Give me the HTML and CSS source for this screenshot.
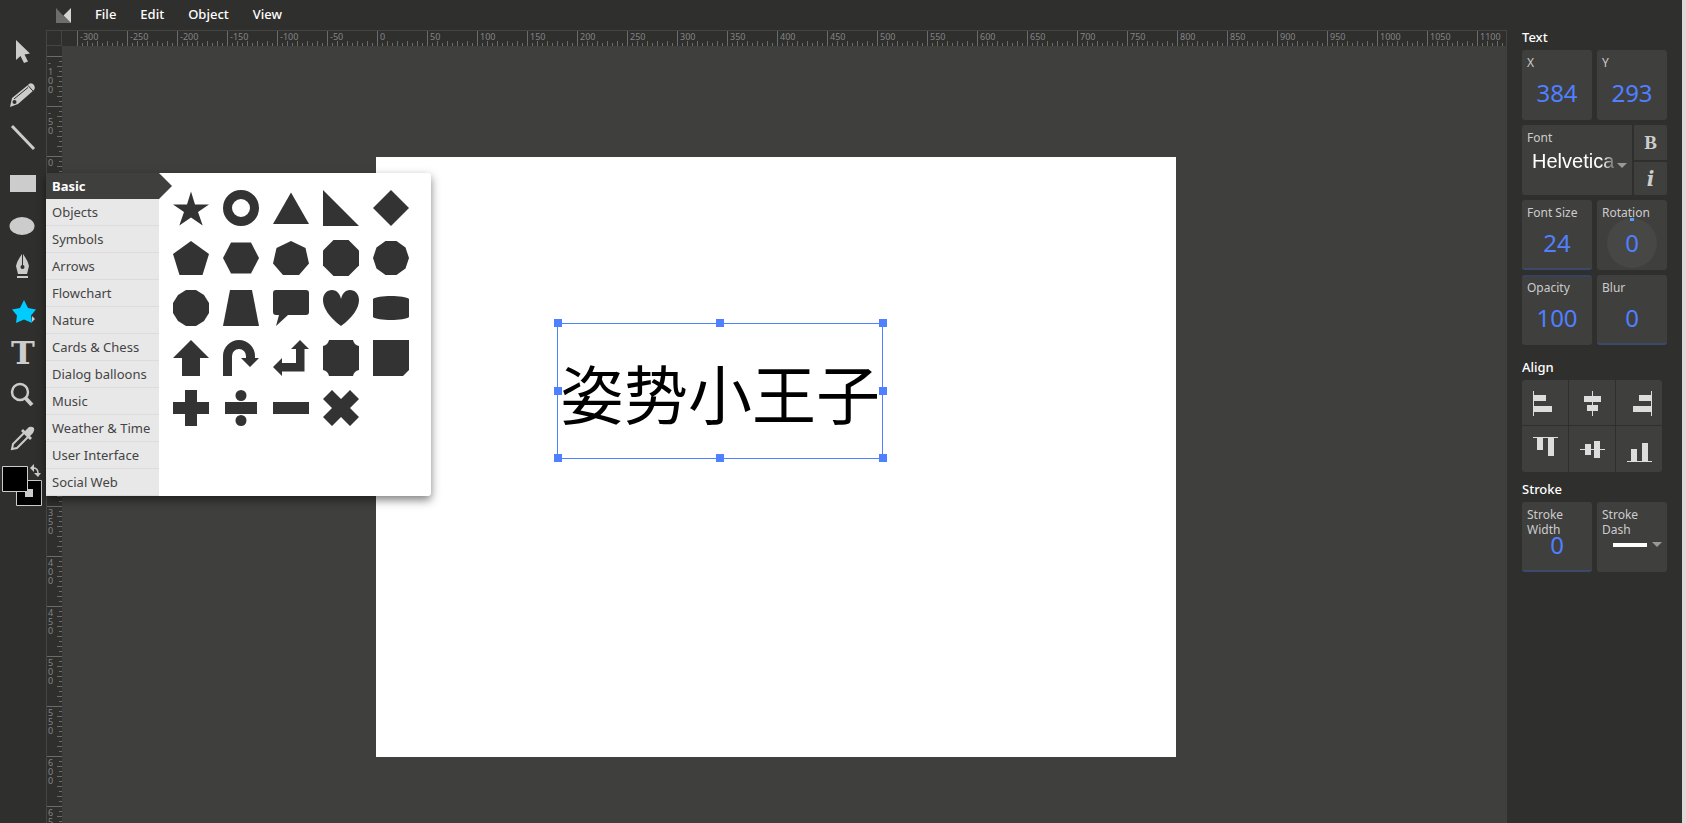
FILE: index.html
```html
<!DOCTYPE html>
<html lang="en">
<head>
  <meta charset="utf-8">
  <title>Vector Editor</title>
  <link rel="stylesheet" href="styles.css">
</head>
<body>
  <header class="menu-bar">
    <svg class="logo" viewBox="0 0 15 15">
      <path d="M0 0L7 7.500L15 15H0Z" fill="#6d6d6b"/>
      <path d="M15 0V15L7.500 7.500Z" fill="#d4d4d2"/>
    </svg>
    <nav class="menus">
      <button type="button">File</button>
      <button type="button">Edit</button>
      <button type="button">Object</button>
      <button type="button">View</button>
    </nav>
  </header>

  <aside class="tools">
    <button type="button" class="tool" aria-label="Select">
      <svg viewBox="0 0 46 43"><path d="M16 10L30 23.500L24.500 24.500L28 31.500L24 33L20.500 26L16 30Z"/></svg>
    </button>
    <button type="button" class="tool" aria-label="Pencil">
      <svg viewBox="0 0 46 43">
        <path d="M10 34L12 25L28 12Q30 9 33 11Q36 14 34 17L18 31Z"/>
        <path d="M14 26L28 14.500M28 12.500L33 18" stroke="#2f2f2e" fill="none"/>
        <circle cx="14.500" cy="29" r="2" fill="#2f2f2e"/>
      </svg>
    </button>
    <button type="button" class="tool" aria-label="Line">
      <svg viewBox="0 0 46 43"><path d="M12 10L34 33" stroke="#ccc" stroke-width="3"/></svg>
    </button>
    <button type="button" class="tool" aria-label="Rectangle">
      <svg viewBox="0 0 46 43"><path d="M10 16H36V33H10Z"/></svg>
    </button>
    <button type="button" class="tool" aria-label="Ellipse">
      <svg viewBox="0 0 46 43"><ellipse cx="22" cy="24" rx="12.500" ry="9"/></svg>
    </button>
    <button type="button" class="tool" aria-label="Pen">
      <svg viewBox="0 0 46 43">
        <path d="M22 9Q17 16 16 21L18 29H27L29 21Q28 16 23 9V21H22ZM17 31H28V33H17Z"/>
        <circle cx="22.500" cy="22" r="2" fill="#2f2f2e"/>
      </svg>
    </button>
    <div class="tool-group">
      <button type="button" class="tool active" aria-label="Shapes">
        <svg viewBox="0 0 46 43">
          <path d="M24 12L28 20L36 21.500L31 27.500L32 35L24 31.500L16 35L17 27.500L12 21.500L20 20Z"/>
          <path d="M32 28L35 31L32 34Z" fill="#ccc"/>
        </svg>
      </button>
      <div class="shape-library">
        <ul class="categories">
          <li class="current"><button type="button">Basic</button></li>
          <li><button type="button">Objects</button></li>
          <li><button type="button">Symbols</button></li>
          <li><button type="button">Arrows</button></li>
          <li><button type="button">Flowchart</button></li>
          <li><button type="button">Nature</button></li>
          <li><button type="button">Cards &amp; Chess</button></li>
          <li><button type="button">Dialog balloons</button></li>
          <li><button type="button">Music</button></li>
          <li><button type="button">Weather &amp; Time</button></li>
          <li><button type="button">User Interface</button></li>
          <li><button type="button">Social Web</button></li>
        </ul>
        <div class="shapes">
          <button type="button" aria-label="Star"><svg viewBox="0 0 36 36"><path d="M18 1.500L22 14.500H36L25 22L29.700 35.500L18 27.500L6.300 35.500L11 22L0 14.500H14Z"/></svg></button>
          <button type="button" aria-label="Donut"><svg viewBox="0 0 36 36"><circle cx="18" cy="18" r="13.500" fill="none" stroke="#333" stroke-width="9"/></svg></button>
          <button type="button" aria-label="Triangle"><svg viewBox="0 0 36 36"><path d="M18 2.500L36 34H0Z"/></svg></button>
          <button type="button" aria-label="Right triangle"><svg viewBox="0 0 36 36"><path d="M0 0L36 36H0Z"/></svg></button>
          <button type="button" aria-label="Diamond"><svg viewBox="0 0 36 36"><path d="M18 0L36 18L18 36L0 18Z"/></svg></button>

          <button type="button" aria-label="Pentagon"><svg viewBox="0 0 36 36"><path d="M18 1L36 14L29.500 35H6.500L0 14Z"/></svg></button>
          <button type="button" aria-label="Hexagon"><svg viewBox="0 0 36 36"><path d="M0 18L8 2.500H28L36 18L28 33.500H8Z"/></svg></button>
          <button type="button" aria-label="Heptagon"><svg viewBox="0 0 36 36"><path d="M18 1L32.500 8L36 23.500L26 35H10L0 23.500L3.500 8Z"/></svg></button>
          <button type="button" aria-label="Octagon"><svg viewBox="0 0 36 36"><path d="M10.500 0H25.500L36 10.500V25.500L25.500 36H10.500L0 25.500V10.500Z"/></svg></button>
          <button type="button" aria-label="Decagon"><svg viewBox="0 0 36 36"><path d="M12.500 1H23.500L32.500 7.500L36 18L32.500 28.500L23.500 35H12.500L3.500 28.500L0 18L3.500 7.500Z"/></svg></button>

          <button type="button" aria-label="Dodecagon"><svg viewBox="0 0 36 36"><path d="M13 0H23L31 5L36 13V23L31 31L23 36H13L5 31L0 23V13L5 5Z"/></svg></button>
          <button type="button" aria-label="Trapezoid"><svg viewBox="0 0 36 36"><path d="M7 0H29L36 36H0Z"/></svg></button>
          <button type="button" aria-label="Speech bubble"><svg viewBox="0 0 36 36"><path d="M3 0H33Q36 0 36 3V22Q36 25 33 25H15L3 36L6 25H3Q0 25 0 22V3Q0 0 3 0Z"/></svg></button>
          <button type="button" aria-label="Heart"><svg viewBox="0 0 36 36"><path d="M18 36C6 27 0 18 0 10C0 4 4 0 9 0C14 0 17 4 18 9C19 4 22 0 27 0C32 0 36 4 36 10C36 18 30 27 18 36Z"/></svg></button>
          <button type="button" aria-label="Cylinder"><svg viewBox="0 0 36 36"><path d="M0 9C4 5 32 5 36 9V27C32 31 4 31 0 27Z"/></svg></button>

          <button type="button" aria-label="Arrow up"><svg viewBox="0 0 36 36"><path d="M18 0L36 18H27V36H9V18H0Z"/></svg></button>
          <button type="button" aria-label="U-turn arrow"><svg viewBox="0 0 36 36"><path d="M0 36V16A16 16 0 0 1 32 16V18H36L27 27L18 18H23V16A7 7 0 0 0 9 16V36Z"/></svg></button>
          <button type="button" aria-label="Corner arrow"><svg viewBox="0 0 36 36"><path d="M27 0L36 9H31.500V31.500H9V36L0 27L9 18V23H23V9H18Z"/></svg></button>
          <button type="button" aria-label="Plaque"><svg viewBox="0 0 36 36"><path d="M6 0H30Q31 5 36 6V30Q31 31 30 36H6Q5 31 0 30V6Q5 5 6 0Z"/></svg></button>
          <button type="button" aria-label="Cut rectangle"><svg viewBox="0 0 36 36"><path d="M0 0H36V30L30 36H0Z"/></svg></button>

          <button type="button" aria-label="Plus"><svg viewBox="0 0 36 36"><path d="M12 0H24V12H36V24H24V36H12V24H0V12H12Z"/></svg></button>
          <button type="button" aria-label="Divide"><svg viewBox="0 0 36 36"><circle cx="18" cy="5.500" r="5.500"/><circle cx="18" cy="30.500" r="5.500"/><path d="M2 12H34V24H2Z"/></svg></button>
          <button type="button" aria-label="Minus"><svg viewBox="0 0 36 36"><path d="M0 12H36V24H0Z"/></svg></button>
          <button type="button" aria-label="Multiply"><svg viewBox="0 0 36 36"><path d="M9 0L18 9L27 0L36 9L27 18L36 27L27 36L18 27L9 36L0 27L9 18L0 9Z"/></svg></button>
        </div>
      </div>
    </div>
    <button type="button" class="tool text-tool">T</button>
    <button type="button" class="tool" aria-label="Zoom">
      <svg viewBox="0 0 46 43">
        <circle cx="20" cy="18" r="8" fill="none" stroke="#ccc" stroke-width="2.500"/>
        <path d="M25.500 24L32 31" stroke="#ccc" stroke-width="4"/>
      </svg>
    </button>
    <button type="button" class="tool" aria-label="Eyedropper">
      <svg viewBox="0 0 46 43">
        <path d="M24 16L13 27L12 32L17 31L28 20" fill="none" stroke="#ccc" stroke-width="2"/>
        <path d="M21 14L23 12L25 14L29 10Q32 9 34 11Q35 13 33 16L30 19L32 21L30 23Z"/>
      </svg>
    </button>
    <div class="swatches">
      <svg viewBox="0 0 46 46">
        <path d="M16.500 20.500H41.500V45.500H16.500Z" fill="#000" stroke="#ccc"/>
        <path d="M25 29H33V37H25Z"/>
        <path d="M2.500 6.500H27.500V31.500H2.500Z" fill="#000" stroke="#ccc"/>
        <path d="M30 8L34 4V12ZM38 17L34 13H41Z"/>
        <path d="M33 8Q38 8 38 13" fill="none" stroke="#ccc" stroke-width="1.500"/>
      </svg>
    </div>
  </aside>

  <main class="editor">
    <div class="ruler-corner"></div>
    <div class="ruler ruler-x" id="rulerX"></div>
    <div class="ruler ruler-y" id="rulerY"></div>
    <div class="workspace">
      <div class="artboard">
        <div class="selection">
          <span class="canvas-text" lang="zh">姿势小王子</span>
          <i class="handle top left"></i>
          <i class="handle top center"></i>
          <i class="handle top right"></i>
          <i class="handle middle left"></i>
          <i class="handle middle right"></i>
          <i class="handle bottom left"></i>
          <i class="handle bottom center"></i>
          <i class="handle bottom right"></i>
        </div>
      </div>
    </div>
  </main>

  <aside class="panel">
    <section>
      <h2>Text</h2>
      <div class="row">
        <label class="tile"><span>X</span><input type="text" value="384"></label>
        <label class="tile"><span>Y</span><input type="text" value="293"></label>
      </div>
      <div class="row">
        <label class="tile font-tile">
          <span>Font</span>
          <select class="font-select">
            <option selected>Helvetica</option>
            <option>Serif</option>
            <option>Courier</option>
          </select>
        </label>
        <div class="font-styles">
          <button type="button" class="bold">B</button>
          <button type="button" class="italic">i</button>
        </div>
      </div>
      <div class="row">
        <label class="tile bar-bottom"><span>Font Size</span><input type="text" value="24"></label>
        <label class="tile dial"><span>Rotation</span><input type="text" value="0"></label>
      </div>
      <div class="row">
        <label class="tile bar-top"><span>Opacity</span><input type="text" value="100"></label>
        <label class="tile bar-bottom"><span>Blur</span><input type="text" value="0"></label>
      </div>
    </section>

    <section>
      <h2>Align</h2>
      <div class="align">
        <button type="button" aria-label="Align left"><svg viewBox="0 0 46 46"><path d="M11 11H12V36H11ZM12 15H24V21H12ZM12 26H30V32H12Z"/></svg></button>
        <button type="button" aria-label="Align center"><svg viewBox="0 0 46 46"><path d="M23 11H24V36H23ZM15 16H32V22H15ZM18 25H29V31H18Z"/></svg></button>
        <button type="button" aria-label="Align right"><svg viewBox="0 0 46 46"><path d="M35 11H36V36H35ZM23 15H35V21H23ZM17 26H35V32H17Z"/></svg></button>
        <button type="button" aria-label="Align top"><svg viewBox="0 0 46 46"><path d="M11 11H36V12H11ZM15 12H21V24H15ZM26 12H32V30H26Z"/></svg></button>
        <button type="button" aria-label="Align middle"><svg viewBox="0 0 46 46"><path d="M11 23H36V24H11ZM16 18H22V29H16ZM25 15H31V32H25Z"/></svg></button>
        <button type="button" aria-label="Align bottom"><svg viewBox="0 0 46 46"><path d="M11 35H36V36H11ZM15 23H21V35H15ZM26 17H32V35H26Z"/></svg></button>
      </div>
    </section>

    <section>
      <h2>Stroke</h2>
      <div class="row">
        <label class="tile bar-bottom"><span>Stroke Width</span><input type="text" value="0"></label>
        <label class="tile dash-tile">
          <span>Stroke Dash</span>
          <select class="dash-select">
            <option value="none" aria-label="Solid"></option>
          </select>
        </label>
      </div>
    </section>
  </aside>

  <script>
    function fillRuler(id, from, to) {
      const ruler = document.getElementById(id);
      for (let n = from; n <= to; n += 50) {
        const mark = document.createElement('span');
        mark.className = 'mark';
        mark.textContent = n;
        ruler.appendChild(mark);
      }
    }

    fillRuler('rulerX', -300, 1100);
    fillRuler('rulerY', -100, 650);
  </script>
</body>
</html>
```
FILE: styles.css
```css
* {
  box-sizing: border-box;
}

body {
  margin: 0;
  height: 100vh;
  display: grid;
  grid-template-columns: 46px 1fr 175px;
  grid-template-rows: 30px 1fr;
  overflow: hidden;
  background: #2f2f2e;
  border-right: 4px solid #dcdad8;
  color: #fff;
  font-family: "Noto Sans", "Open Sans", sans-serif;
  font-size: 13px;
}

button,
input,
select {
  font: inherit;
  color: inherit;
  background: none;
  border: none;
  border-radius: 0;
  margin: 0;
  padding: 0;
}

button {
  cursor: pointer;
}

svg {
  display: block;
}

/* Menu bar */
.menu-bar {
  grid-column: 1 / 3;
  display: flex;
  align-items: center;
  padding-left: 56px;
}

.logo {
  width: 15px;
  height: 15px;
}

.menus {
  display: flex;
  padding-left: 12px;
}

.menus button {
  padding: 0 12px 2px;
  line-height: 28px;
  font-weight: 500;
}

/* Tools */
.tools {
  grid-row: 2;
  position: relative;
  z-index: 2;
}

.tool {
  display: block;
  width: 46px;
  height: 43px;
  fill: #ccc;
  color: #ccc;
}

.tool.active {
  fill: #00ccff;
}

.text-tool {
  padding-top: 2px;
  font-family: "DejaVu Serif", serif;
  font-weight: bold;
  font-size: 32px;
  line-height: 41px;
}

.tool-group {
  position: relative;
}

.swatches {
  fill: #ccc;
}

/* Shape library */
.shape-library {
  position: absolute;
  top: -115px;
  left: 46px;
  width: 385px;
  display: flex;
  background: #fff;
  border-radius: 3px;
  box-shadow: 0 4px 10px rgba(0, 0, 0, 0.5);
}

.categories {
  list-style: none;
  margin: 0;
  padding: 0;
  width: 113px;
  background: #e8e8e8;
  border-radius: 3px 0 0 3px;
}

.categories li {
  border-bottom: 1px solid #dcdcdc;
}

.categories button {
  width: 100%;
  padding-left: 6px;
  line-height: 26px;
  text-align: left;
  white-space: nowrap;
  color: #444;
}

.categories .current {
  position: relative;
  border-bottom: none;
  background: #3f3f3e;
}

.categories .current button {
  color: #fff;
  font-weight: bold;
}

.categories .current::after {
  content: "";
  position: absolute;
  left: 100%;
  top: 0;
  border: 13px solid transparent;
  border-left-color: #3f3f3e;
  border-right-width: 0;
}

.shapes {
  display: grid;
  grid-template-columns: repeat(5, 36px);
  grid-auto-rows: 36px;
  gap: 14px;
  padding: 17px 14px;
  fill: #333;
}

/* Rulers and canvas */
.editor {
  grid-row: 2;
  display: grid;
  grid-template-columns: 15px 1fr;
  grid-template-rows: 15px 1fr;
  min-width: 0;
  min-height: 0;
  border-top: 1px solid #454544;
  border-left: 1px solid #454544;
}

.ruler-corner {
  border-right: 1px solid #454544;
  border-bottom: 1px solid #454544;
}

.ruler {
  display: flex;
  overflow: hidden;
  min-width: 0;
  min-height: 0;
  color: #858584;
  font-size: 9px;
}

.mark {
  flex: none;
}

.ruler-x {
  padding-left: 15px;
  border-right: 1px solid #454544;
}

.ruler-x .mark {
  width: 50px;
  height: 15px;
  padding-left: 2px;
  line-height: 12px;
  border-left: 1px solid #6b6b6a;
  background:
    repeating-linear-gradient(to right, transparent 0 9px, #6b6b6a 9px 10px) 0 100% / 100% 5px no-repeat,
    repeating-linear-gradient(to right, transparent 0 4px, #6b6b6a 4px 5px) 0 100% / 100% 3px no-repeat;
}

.ruler-y {
  flex-direction: column;
  padding-top: 10px;
}

.ruler-y .mark {
  width: 15px;
  height: 50px;
  padding: 1px 9px 0 1px;
  line-height: 9px;
  word-break: break-all;
  line-break: anywhere;
  border-top: 1px solid #6b6b6a;
  background:
    repeating-linear-gradient(to bottom, transparent 0 9px, #6b6b6a 9px 10px) 100% 0 / 5px 100% no-repeat,
    repeating-linear-gradient(to bottom, transparent 0 4px, #6b6b6a 4px 5px) 100% 0 / 3px 100% no-repeat;
}

.workspace {
  overflow: hidden;
  background: #3f3f3e;
}

.artboard {
  position: relative;
  width: 800px;
  height: 600px;
  margin: 111px 0 0 314px;
  background: #fff;
}

.selection {
  position: absolute;
  left: 181px;
  top: 166px;
  width: 326px;
  height: 136px;
  display: flex;
  align-items: center;
  justify-content: center;
  border: 1px solid #4f80ff;
}

.canvas-text {
  color: #000;
  font-family: "Noto Sans CJK SC", sans-serif;
  font-size: 64px;
  line-height: 64px;
  white-space: nowrap;
}

.handle {
  position: absolute;
  width: 8px;
  height: 8px;
  background: #4f80ff;
}

.handle.top { top: -5px; }
.handle.middle { top: calc(50% - 4px); }
.handle.bottom { bottom: -4px; }
.handle.left { left: -4px; }
.handle.center { left: calc(50% - 4px); }
.handle.right { right: -5px; }

/* Properties panel */
.panel {
  grid-column: 3;
  grid-row: 1 / 3;
  padding: 24px 15px;
}

.panel section {
  padding-bottom: 4px;
}

.panel h2 {
  margin: 0;
  font-size: 13px;
  line-height: 26px;
  font-weight: 500;
}

.row {
  display: flex;
  gap: 5px;
  margin-bottom: 5px;
}

.tile {
  position: relative;
  flex: none;
  width: 70px;
  height: 70px;
  padding-top: 5px;
  background: #3f3f3e;
  border-radius: 3px;
}

.tile span {
  position: relative;
  display: block;
  height: 14px;
  padding: 0 5px;
  font-size: 12px;
  line-height: 15px;
  color: #ccc;
}

.tile input {
  position: relative;
  display: block;
  width: 100%;
  height: 46px;
  text-align: center;
  font-size: 24px;
  color: #4f80ff;
}

.bar-bottom {
  border-bottom: 2px solid #3c496b;
}

.bar-top {
  border-top: 2px solid #37425f;
  padding-top: 3px;
}

.dial::before {
  content: "";
  position: absolute;
  left: 10px;
  top: 18px;
  width: 50px;
  height: 50px;
  border-radius: 50%;
  background: #474746;
}

.dial::after {
  content: "";
  position: absolute;
  left: 33px;
  top: 18px;
  width: 4px;
  height: 3px;
  background: #4f9fff;
}

.font-tile {
  width: 110px;
  border-radius: 3px 0 0 3px;
}

.font-select,
.dash-select {
  appearance: none;
  display: block;
}

.font-select {
  width: 92px;
  height: 34px;
  padding-left: 10px;
  font-family: "Liberation Sans", Arial, sans-serif;
  font-size: 20px;
  mask-image: linear-gradient(to right, #000 80px, transparent 96px);
}

.font-tile::after,
.dash-tile::after {
  content: "";
  position: absolute;
  right: 5px;
  top: 38px;
  border: 5px solid transparent;
  border-top-color: #999;
  border-bottom-width: 0;
  pointer-events: none;
}

.dash-tile::after {
  top: 40px;
}

.dash-select {
  width: 100%;
  height: 46px;
  background: linear-gradient(#fff, #fff) 16px 22px / 34px 4px no-repeat;
}

.font-styles {
  display: grid;
  grid-template-rows: 35px 33px;
  gap: 2px;
  width: 33px;
  margin-left: -3px;
  color: #ccc;
}

.font-styles button {
  background: #3f3f3e;
}

.font-styles .bold {
  font-family: "Liberation Serif", serif;
  font-weight: bold;
  font-size: 19px;
  border-radius: 0 3px 0 0;
}

.font-styles .italic {
  font-family: "DejaVu Serif", serif;
  font-style: italic;
  font-weight: bold;
  font-size: 20px;
  border-radius: 0 0 3px 0;
}

.align {
  display: grid;
  grid-template-columns: repeat(3, 46px);
  grid-template-rows: 45px 46px;
  gap: 1px;
  width: 140px;
  border-radius: 3px;
  overflow: hidden;
  fill: #ddd;
}

.align button {
  height: 100%;
  overflow: hidden;
  background: #3f3f3e;
}
```
